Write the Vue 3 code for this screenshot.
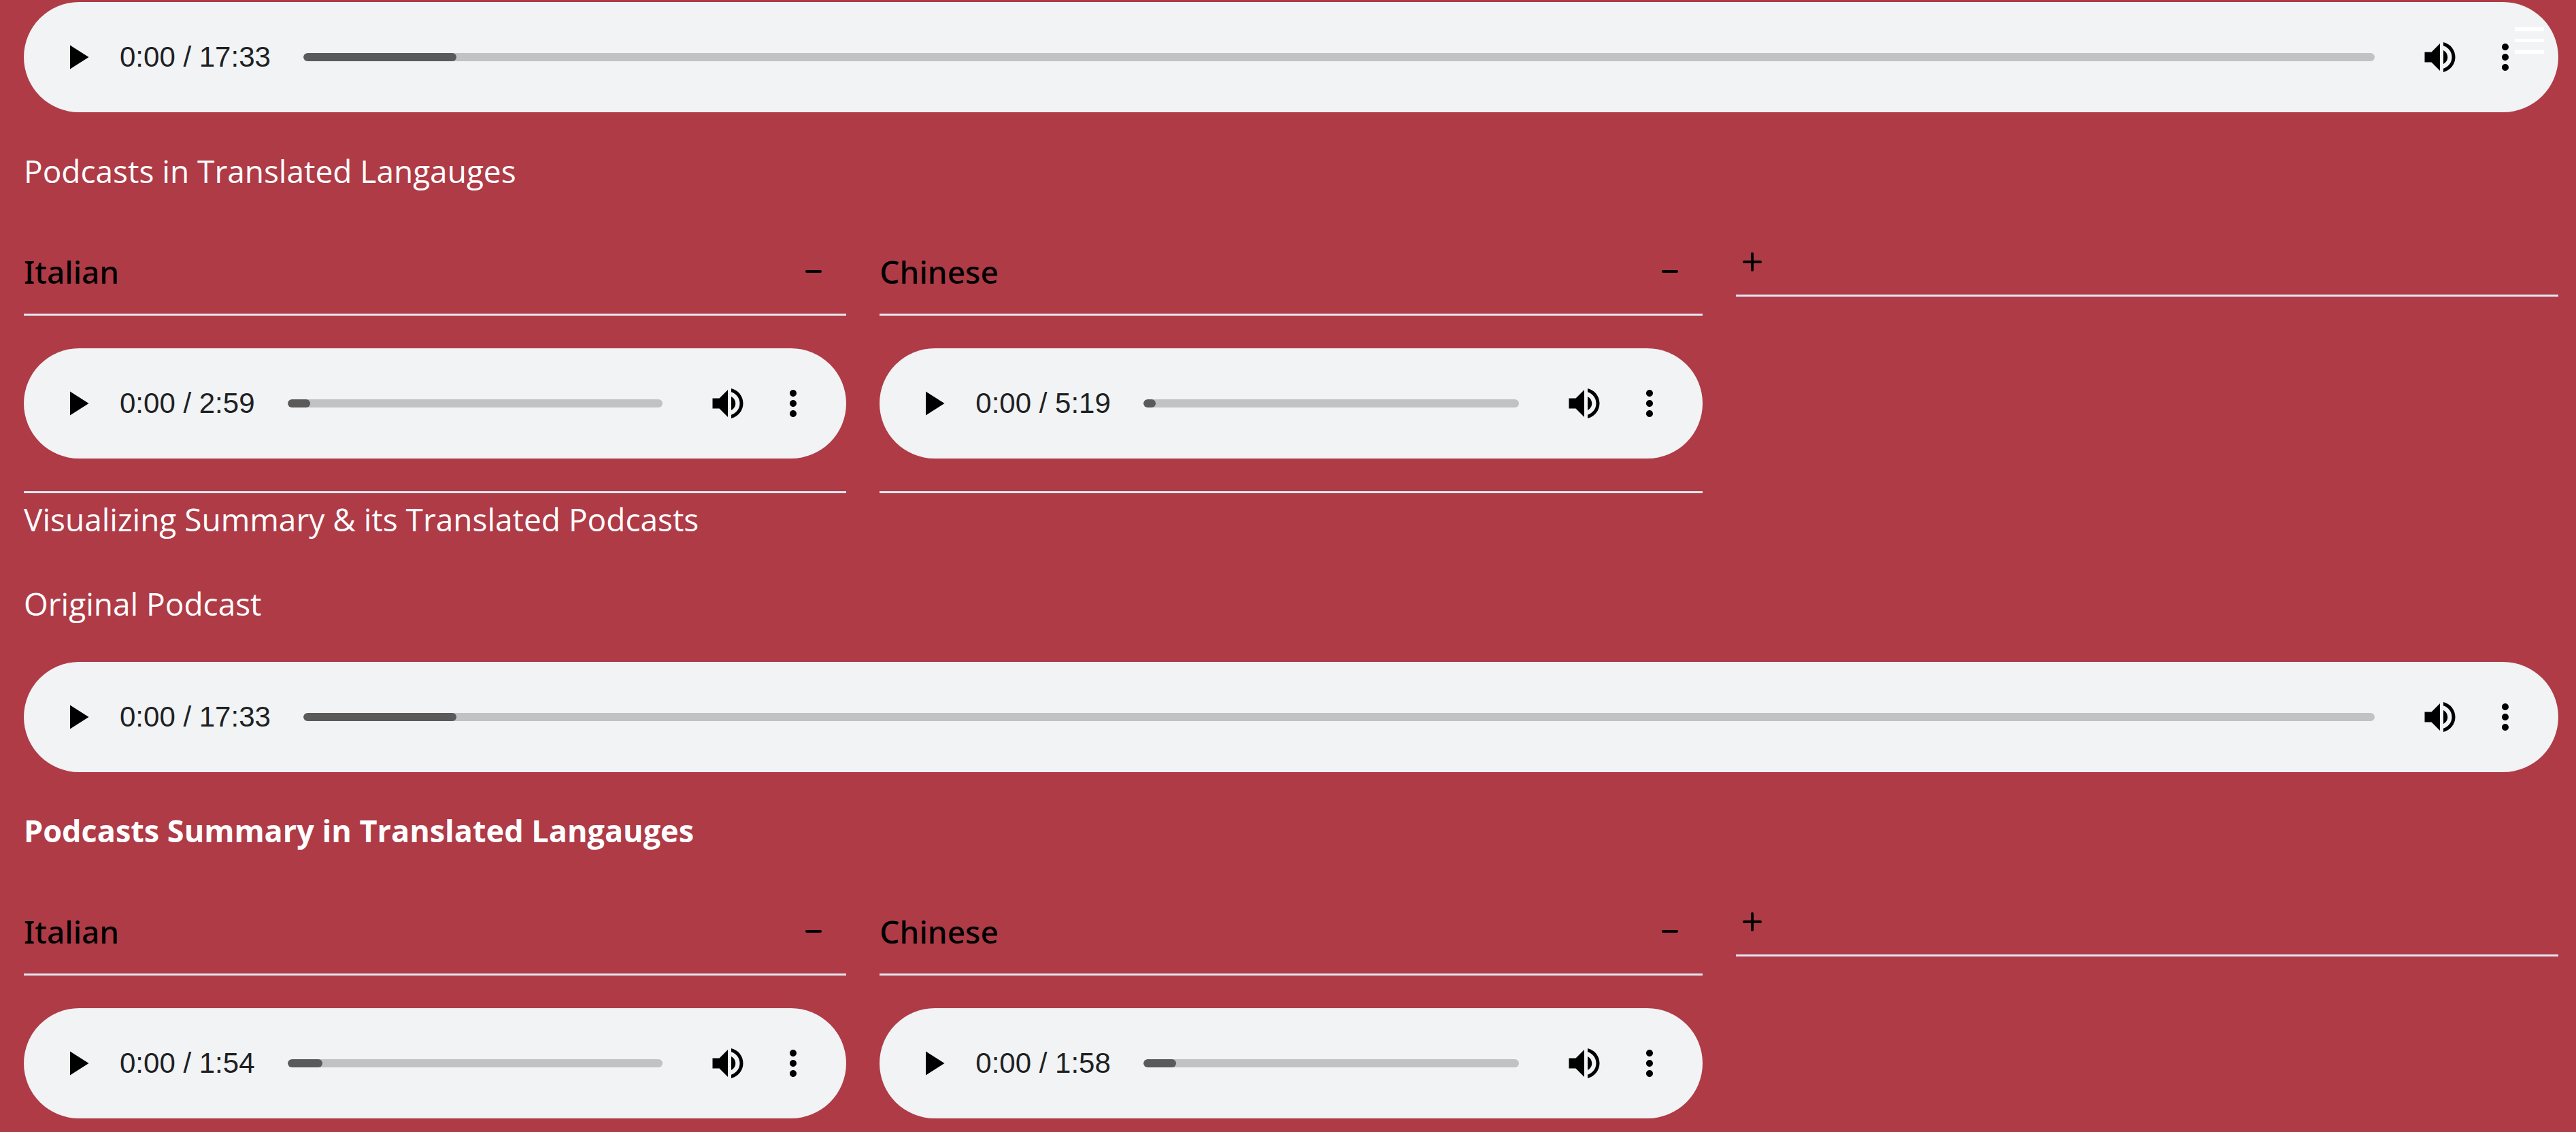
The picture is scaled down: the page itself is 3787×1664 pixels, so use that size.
<script setup>
import { h } from 'vue'

const sections = [
  {
    id: 'full',
    titles: [],
    total: '17:33',
    buffered: 225,
    heading: 'Podcasts in Translated Langauges',
    strong: false,
    items: [
      { language: 'Italian', total: '2:59', buffered: 33 },
      { language: 'Chinese', total: '5:19', buffered: 18 }
    ]
  },
  {
    id: 'summary',
    titles: ['Visualizing Summary & its Translated Podcasts', 'Original Podcast'],
    total: '17:33',
    buffered: 225,
    heading: 'Podcasts Summary in Translated Langauges',
    strong: true,
    items: [
      { language: 'Italian', total: '1:54', buffered: 51 },
      { language: 'Chinese', total: '1:58', buffered: 48 }
    ]
  }
]

const icons = {
  Play: 'M8 5v14l11-7z',
  Mute: 'M3 9v6h4l5 5V4L7 9H3zm13.5 3c0-1.77-1.02-3.29-2.5-4.03v8.05c1.48-.73 2.5-2.25 2.5-4.02zM14 3.23v2.06c2.89.86 5 3.54 5 6.71s-2.11 5.85-5 6.71v2.06c4.01-.91 7-4.49 7-8.77s-2.99-7.86-7-8.77z',
  'More options':
    'M12 8c1.1 0 2-.9 2-2s-.9-2-2-2-2 .9-2 2 .9 2 2 2zm0 2c-1.1 0-2 .9-2 2s.9 2 2 2 2-.9 2-2-.9-2-2-2zm0 6c-1.1 0-2 .9-2 2s.9 2 2 2 2-.9 2-2-.9-2-2-2z'
}

const control = (label) =>
  h('button', { class: 'control', type: 'button', 'aria-label': label }, [
    h('svg', { viewBox: '0 0 24 24', 'aria-hidden': 'true' }, [h('path', { d: icons[label] })])
  ])

const AudioPlayer = (props) =>
  h('div', { class: 'player' }, [
    control('Play'),
    h('span', { class: 'time' }, `0:00 / ${props.total}`),
    h('div', { class: 'track' }, [
      h('div', { class: 'buffered', style: { width: `${props.buffered}px` } })
    ]),
    control('Mute'),
    control('More options')
  ])
AudioPlayer.props = ['total', 'buffered']
</script>

<template>
  <main class="page">
    <button class="menu" type="button" aria-label="Open menu">
      <svg viewBox="0 0 48 48" aria-hidden="true">
        <path d="M2 4h43v6H2zM2 21h43v5H2zM2 37h43v6H2z" fill="#fff" />
      </svg>
    </button>

    <section v-for="section in sections" :key="section.id" class="section">
      <div v-if="section.titles.length" class="titles">
        <h2 v-for="title in section.titles" :key="title" class="heading">{{ title }}</h2>
      </div>

      <AudioPlayer :total="section.total" :buffered="section.buffered" />

      <h3 class="heading sub" :class="{ strong: section.strong }">{{ section.heading }}</h3>

      <div class="columns">
        <article v-for="item in section.items" :key="item.language" class="column">
          <button class="toggle" type="button" aria-expanded="true">
            <span class="language">{{ item.language }}</span>
            <svg class="sign" viewBox="0 0 48 48" aria-hidden="true"><path d="M14 24h20" /></svg>
          </button>
          <div class="panel">
            <AudioPlayer :total="item.total" :buffered="item.buffered" />
          </div>
        </article>
        <div class="column">
          <button class="toggle" type="button" aria-label="Add language">
            <svg class="sign" viewBox="0 0 48 48" aria-hidden="true"><path d="M12 24h24M24 12v24" /></svg>
          </button>
        </div>
      </div>
    </section>
  </main>
</template>

<style>
body {
  background: #af3b47;
}
</style>

<style scoped>
.page {
  position: relative;
  padding: 3px 26px 0 35px;
  font-family: "Open Sans", "Noto Sans", sans-serif;
  font-size: 46px;
  line-height: 72px;
  color: #fff;
}

.page :deep(button) {
  margin: 0;
  padding: 0;
  border: 0;
  background: none;
  color: #000;
  font: inherit;
}

.page .menu {
  position: absolute;
  top: 36px;
  right: 44px;
  width: 48px;
  height: 48px;
}

.menu svg {
  display: block;
}

.titles {
  display: flex;
  flex-direction: column;
  gap: 52px;
  padding: 2px 0 50px;
}

.heading {
  margin: 0;
  font-size: 46px;
  font-weight: 400;
}

.sub {
  margin: 50px 0;
}

.strong {
  font-size: 45px;
  font-weight: 700;
}

.page :deep(.player) {
  display: flex;
  align-items: center;
  box-sizing: border-box;
  height: 162px;
  padding: 0 30px;
  border-radius: 81px;
  background: #f1f3f4;
}

.page :deep(.control) {
  display: flex;
  flex: none;
  align-items: center;
  justify-content: center;
  width: 96px;
  height: 96px;
}

.page :deep(.control svg) {
  width: 60px;
  height: 60px;
}

.page :deep(.time) {
  margin-left: 15px;
  color: #202124;
  font-family: "Liberation Sans", Arial, sans-serif;
  font-size: 42px;
  white-space: nowrap;
}

.page :deep(.track) {
  flex: 1;
  height: 12px;
  margin: 0 48px;
  overflow: hidden;
  border-radius: 6px;
  background: #c1c2c4;
}

.page :deep(.buffered) {
  height: 12px;
  border-radius: 6px;
  background: #5a5a5a;
}

.columns {
  display: grid;
  grid-template-columns: repeat(3, 1fr);
  align-items: start;
  gap: 49px;
}

.page .toggle {
  display: flex;
  align-items: center;
  justify-content: space-between;
  width: 100%;
  padding: 24px 24px 24px 0;
  border-bottom: 3px solid #e5e7f0;
  text-align: left;
}

.language {
  font-family: "Noto Sans", "Open Sans", sans-serif;
  font-weight: 500;
  line-height: 76px;
}

.sign {
  display: block;
  width: 48px;
  height: 48px;
  fill: none;
  stroke: #000;
  stroke-width: 4;
  stroke-linecap: round;
}

.panel {
  padding: 48px 0;
  border-bottom: 3px solid #e5e7f0;
}

.section:last-child .panel {
  padding-bottom: 20px;
  border-bottom: 0;
}
</style>
